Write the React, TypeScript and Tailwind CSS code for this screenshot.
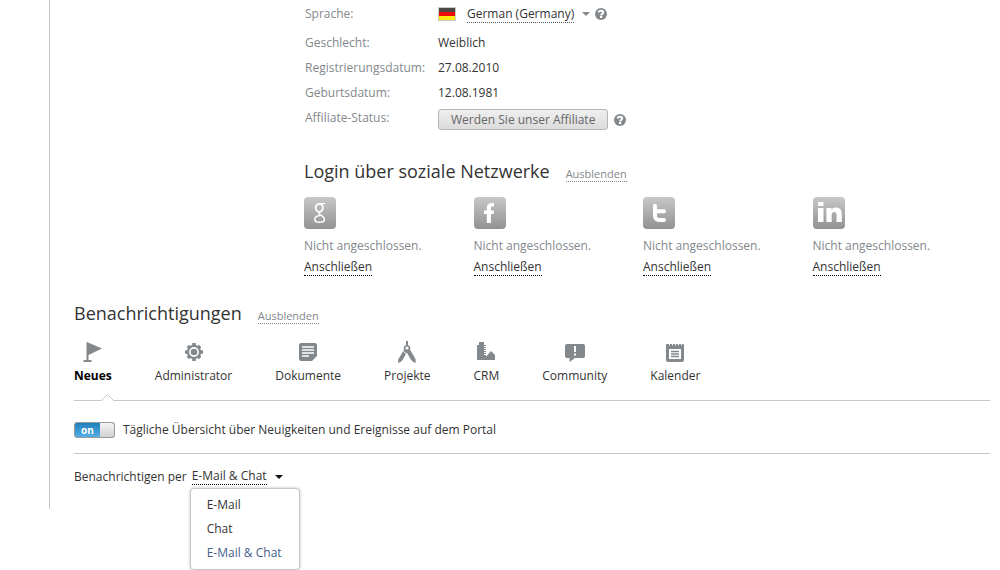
import React, { useState } from "react";

const HINT_COLOR = "#83888d";

function HelpButton({ label }: { label: string }) {
  return (
    <button type="button" aria-label={label} className="block h-3 w-3 shrink-0">
      <svg viewBox="0 0 12 12" className="block h-3 w-3">
        <circle cx="6" cy="6" r="6" fill={HINT_COLOR} />
        <path d="M3.8 4.6C3.8 2.2 8.2 2.2 8.2 4.6C8.2 5.9 6.2 5.8 6.2 7.4" fill="none" stroke="#fff" strokeWidth="2" />
        <rect x="5" y="8" width="2.2" height="2" fill="#fff" />
      </svg>
    </button>
  );
}

function Caret({ color }: { color: string }) {
  return (
    <svg viewBox="0 0 8 4" className="block h-1 w-2">
      <path d="M0 0H8L4 4Z" fill={color} />
    </svg>
  );
}

function GermanFlag() {
  return (
    <svg viewBox="0 0 18 14" className="block h-3.5 w-[18px]" role="img" aria-label="Deutschland">
      <rect width="18" height="14" fill="#c9c9c4" />
      <rect x="1" y="1" width="16" height="4" fill="#4a4744" />
      <rect x="1" y="5" width="16" height="4" fill="#ee0a0a" />
      <rect x="1" y="9" width="16" height="4" fill="#fdea12" />
    </svg>
  );
}

function Row({ term, children }: { term: string; children: React.ReactNode }) {
  return (
    <div className="flex h-[25px] items-center">
      <dt className="w-[133px] shrink-0 text-[#83888d]">{term}</dt>
      <dd className="flex items-center">{children}</dd>
    </div>
  );
}

function SectionTitle({ title }: { title: string }) {
  return (
    <div className="flex items-baseline gap-4">
      <h2 className="text-lg leading-6">{title}</h2>
      <button type="button" className="border-b border-dotted border-[#83888d] text-[11px] leading-[14px] text-[#83888d]">
        Ausblenden
      </button>
    </div>
  );
}

const networks = [
  {
    name: "Google",
    mark: (
      <g fill="none" stroke="#fff">
        <ellipse cx="15.3" cy="10.8" rx="3.6" ry="4" strokeWidth="1.8" />
        <path d="M16 6.6H21" strokeWidth="1.2" />
        <path d="M17 14.4C14.6 15 13.8 16.4 16 17.6C18.6 19 20.4 20 20.4 22.2C20.4 24.2 18.4 25.3 15.6 25.3C12.8 25.3 10.8 24.2 10.8 22.2C10.8 20 13 18.7 16.6 18.5" strokeWidth="1.5" />
      </g>
    ),
  },
  {
    name: "Facebook",
    mark: <path d="M12.8 26V17H10V13.5H12.8V11C12.8 7.6 14.5 6 17.8 6H20V9.4H18.4C17 9.4 16.9 10 16.9 11.2V13.5H20L19.5 17H16.9V26Z" fill="#fff" />,
  },
  {
    name: "Twitter",
    mark: <path d="M12 8.7V18.5Q12 23 16.5 23H21M12 14.2H21" fill="none" stroke="#fff" strokeWidth="4" strokeLinecap="round" />,
  },
  {
    name: "LinkedIn",
    mark: (
      <path d="M5 5H10.5V9H5ZM5 11H10.5V25H5ZM13.4 11H18.4V12.8C19.5 11.3 21 10.6 23 10.6C26.8 10.6 28.8 13 28.8 17V25H23.5V17.8C23.5 15.8 22.8 14.9 21.2 14.9C19.6 14.9 18.7 16 18.7 18V25H13.4Z" fill="#fff" />
    ),
  },
];

function Network({ name, mark }: { name: string; mark: React.ReactNode }) {
  return (
    <li className="flex flex-col items-start">
      <div className="h-8 w-8 rounded-[4px] bg-linear-to-b from-[#c8c8c8] to-[#929292]">
        <svg viewBox="0 0 32 32" className="block h-8 w-8" role="img" aria-label={name}>
          {mark}
        </svg>
      </div>
      <p className="mt-[9px] leading-4 text-[#83888d]">Nicht angeschlossen.</p>
      <a href="#" className="mt-[5px] border-b border-dotted border-black leading-4">
        Anschließen
      </a>
    </li>
  );
}

const tabs = [
  {
    label: "Neues",
    icon: <path d="M4 1L19 7.5L5.5 14V19H8.5V21H0.5V19H3.5V1Z" />,
  },
  {
    label: "Administrator",
    icon: (
      <>
        <g stroke="#83888d" strokeWidth="3.6">
          <path d="M10 2V20M1 11H19M3.9 4.9L16.1 17.1M16.1 4.9L3.9 17.1" />
        </g>
        <circle cx="10" cy="11" r="7.2" />
        <circle cx="10" cy="11" r="4.1" fill="none" stroke="#fff" strokeWidth="1.6" />
      </>
    ),
  },
  {
    label: "Dokumente",
    icon: (
      <>
        <path d="M3 2H17Q19 2 19 4V15L14 20H3Q1 20 1 18V4Q1 2 3 2Z" />
        <path d="M4 6H16M4 9H16M4 12H16M4 15H11" stroke="#fff" strokeWidth="1.4" />
      </>
    ),
  },
  {
    label: "Projekte",
    icon: (
      <>
        <path d="M9 0H11V4.2C13 4.6 14 6.5 13 8.4L18.6 18.2V22C16 21 14.6 19.4 13.2 17.4L9.8 11.4L6.8 17C5.6 19.4 4 21 1.2 22V18.4L7.2 8.6C6 6.6 7 4.6 9 4.2Z" />
        <circle cx="10" cy="7" r="1.6" fill="#fff" />
        <path d="M6.8 10.3L9.8 14" stroke="#fff" strokeWidth="1" />
      </>
    ),
  },
  {
    label: "CRM",
    icon: (
      <>
        <path d="M1 4H3V1H8V4H11V14.5L15 10L19 14V19H1Z" />
        <path d="M8 5.5H10M8 7.5H10M8 9.5H10M8 11.5H10M8 13.5H10M10.5 4V15" stroke="#fff" strokeWidth="1" />
      </>
    ),
  },
  {
    label: "Community",
    icon: (
      <>
        <path d="M2 3H18Q20 3 20 5V15Q20 17 18 17H10L4.5 21V17H2Q0 17 0 15V5Q0 3 2 3Z" />
        <path d="M9 5H11V11H9ZM9 12.5H11V14.5H9Z" fill="#fff" />
      </>
    ),
  },
  {
    label: "Kalender",
    icon: (
      <>
        <path d="M2 3H18Q19 3 19 4V19Q19 21 17 21H3Q1 21 1 19V4Q1 3 2 3Z" />
        <path d="M4.5 2V4.4M7.5 2V4.4M10.5 2V4.4M13.5 2V4.4M16.5 2V4.4" stroke="#fff" strokeWidth="1" />
        <path d="M4 8H16V18H4Z" fill="#fff" />
        <path d="M6 10.5H14M6 13H14M6 15.5H14" stroke="#83888d" strokeWidth="1.3" />
      </>
    ),
  },
];

const channels = ["E-Mail", "Chat", "E-Mail & Chat"];

export default function App() {
  const [channel, setChannel] = useState("E-Mail & Chat");
  const [menuOpen, setMenuOpen] = useState(true);
  const [digest, setDigest] = useState(true);

  return (
    <div className="min-h-screen bg-white pl-[49px] font-['Open_Sans',sans-serif] text-xs text-[#333]">
      <main className="border-l border-[#c7c7c7] pr-2.5 pb-6 pl-6">
        <section className="ml-[230px]">
          <dl className="pl-px">
            <div className="mb-0.5 flex h-7 items-center">
              <dt className="w-[133px] shrink-0 text-[#83888d]">Sprache:</dt>
              <dd className="flex items-center">
                <GermanFlag />
                <button type="button" aria-haspopup="listbox" className="ml-[11px] flex items-center gap-2">
                  <span className="mt-px border-b border-dotted border-[#555] leading-4">German (Germany)</span>
                  <Caret color={HINT_COLOR} />
                </button>
                <span className="ml-[5px]">
                  <HelpButton label="Hilfe zur Sprache" />
                </span>
              </dd>
            </div>
            <Row term="Geschlecht:">Weiblich</Row>
            <Row term="Registrierungsdatum:">27.08.2010</Row>
            <Row term="Geburtsdatum:">12.08.1981</Row>
            <div className="flex items-start">
              <dt className="w-[133px] shrink-0 leading-[25px] text-[#83888d]">Affiliate-Status:</dt>
              <dd className="flex items-center gap-1.5 pt-1">
                <button
                  type="button"
                  className="h-[21px] rounded-[3px] border border-[#b5b5b5] bg-linear-to-b from-[#efefef] to-[#dcdcdc] px-3 leading-[19px] text-[#666]"
                >
                  Werden Sie unser Affiliate
                </button>
                <HelpButton label="Hilfe zum Affiliate-Status" />
              </dd>
            </div>
          </dl>

          <div className="mt-[29px]">
            <SectionTitle title="Login über soziale Netzwerke" />
          </div>
          <ul className="mt-3.5 mr-2 grid grid-cols-4">
            {networks.map((n) => (
              <Network key={n.name} name={n.name} mark={n.mark} />
            ))}
          </ul>
        </section>

        <section className="mt-[25px]">
          <SectionTitle title="Benachrichtigungen" />
          <div role="tablist" className="relative mt-4 flex gap-[43px] border-b border-[#c7c7c7] pb-[15px]">
            {tabs.map((t, i) => (
              <button
                key={t.label}
                type="button"
                role="tab"
                aria-selected={i === 0}
                className="flex flex-col items-center gap-1 leading-[18px] aria-selected:font-bold aria-selected:text-black"
              >
                <svg viewBox="0 0 20 22" className="block h-[22px] w-5" fill="#83888d">
                  {t.icon}
                </svg>
                {t.label}
              </button>
            ))}
            <svg viewBox="0 0 13 7" className="absolute -bottom-px left-[27px] h-[7px] w-[13px]" aria-hidden="true">
              <path d="M0.5 6.5L6.5 0.5L12.5 6.5V7H0.5Z" fill="#fff" />
              <path d="M0.5 6.5L6.5 0.5L12.5 6.5" fill="none" stroke="#c7c7c7" />
            </svg>
          </div>

          <div className="flex h-[53px] items-center border-b border-[#c7c7c7] pt-[5px]">
            <label className="flex items-center gap-2">
              <input
                type="checkbox"
                role="switch"
                checked={digest}
                onChange={() => setDigest(!digest)}
                className="peer sr-only"
              />
              <span className="flex h-4 w-[41px] overflow-hidden rounded-[3px] border border-[#999] bg-[#aaa] peer-checked:bg-linear-to-b peer-checked:from-[#1c7fba] peer-checked:to-[#55aee8]">
                <span className="flex-1 text-center text-[10px] leading-[14px] font-bold text-white" aria-hidden="true">
                  {digest ? "on" : "off"}
                </span>
                <span className="w-[14px] rounded-r-[2px] bg-linear-to-b from-[#f4f4f4] to-[#d2d2d2]" />
              </span>
              <span>Tägliche Übersicht über Neuigkeiten und Ereignisse auf dem Portal</span>
            </label>
          </div>

          <div className="mt-3.5 flex items-center gap-[5px]">
            <span>Benachrichtigen per</span>
            <div className="relative">
              <button
                type="button"
                aria-haspopup="listbox"
                aria-expanded={menuOpen}
                onClick={() => setMenuOpen(!menuOpen)}
                className="flex items-center gap-2"
              >
                <span className="border-b border-dotted border-black leading-4">{channel}</span>
                <Caret color="#111" />
              </button>
              {menuOpen && (
                <ul
                  role="listbox"
                  aria-label="Benachrichtigen per"
                  className="absolute top-full -left-0.5 mt-[3px] w-[110px] rounded-[4px] border border-[#c7c7c7] bg-white py-1 shadow-[0_0_3px_rgba(0,0,0,0.25)]"
                >
                  {channels.map((c) => (
                    <li key={c} role="option" aria-selected={c === channel}>
                      <button
                        type="button"
                        onClick={() => {
                          setChannel(c);
                          setMenuOpen(false);
                        }}
                        className={c === channel ? "block w-full px-4 text-left leading-6 text-[#44618a]" : "block w-full px-4 text-left leading-6"}
                      >
                        {c}
                      </button>
                    </li>
                  ))}
                </ul>
              )}
            </div>
          </div>
        </section>
      </main>
    </div>
  );
}
